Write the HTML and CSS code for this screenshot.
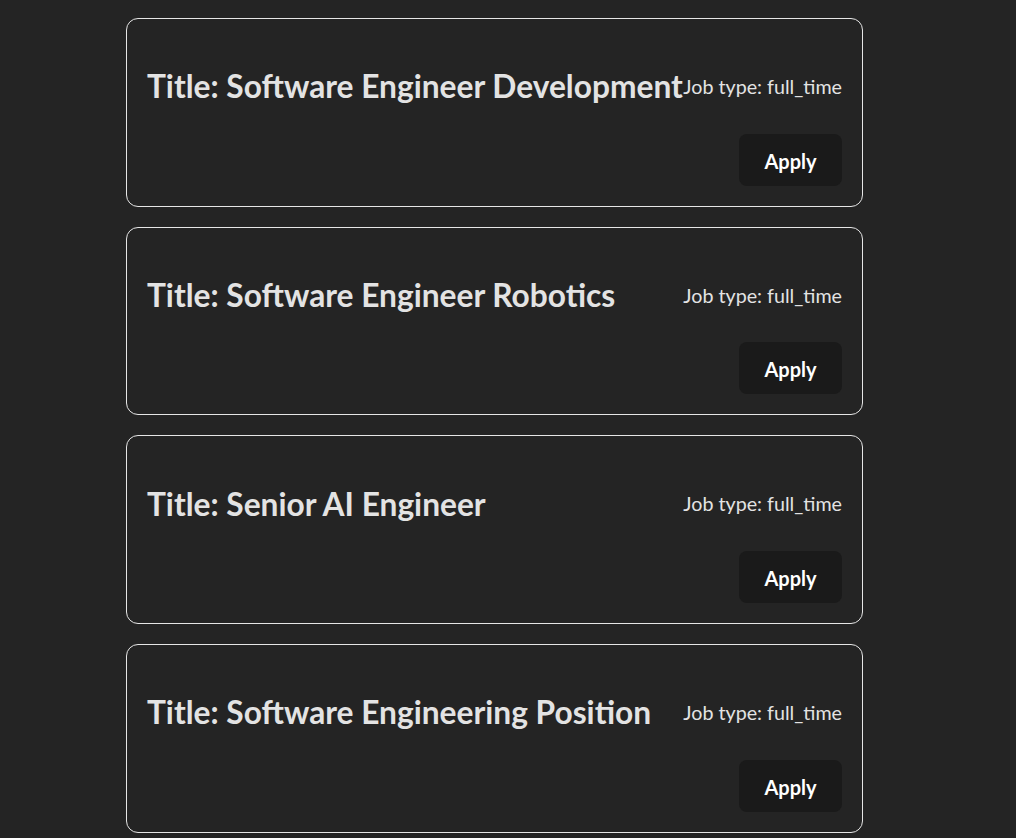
FILE: index.html
```html
<!DOCTYPE html>
<html lang="en">
<head>
<meta charset="utf-8">
<title>Jobs</title>
<link rel="stylesheet" href="styles.css">
</head>
<body>
<div class="list">
  <div class="card">
    <div class="row">
      <h1 class="title">Title: Software Engineer Development</h1>
      <p class="type">Job type: full_time</p>
    </div>
    <div class="actions"><button class="apply">Apply</button></div>
  </div>
  <div class="card">
    <div class="row">
      <h1 class="title">Title: Software Engineer Robotics</h1>
      <p class="type">Job type: full_time</p>
    </div>
    <div class="actions"><button class="apply">Apply</button></div>
  </div>
  <div class="card">
    <div class="row">
      <h1 class="title">Title: Senior AI Engineer</h1>
      <p class="type">Job type: full_time</p>
    </div>
    <div class="actions"><button class="apply">Apply</button></div>
  </div>
  <div class="card">
    <div class="row">
      <h1 class="title">Title: Software Engineering Position</h1>
      <p class="type">Job type: full_time</p>
    </div>
    <div class="actions"><button class="apply">Apply</button></div>
  </div>
</div>
</body>
</html>
```
FILE: styles.css
```css
html, body {
  margin: 0;
  padding: 0;
  background: #242424;
}
body {
  font-family: Lato, "Open Sans", sans-serif;
  color: rgba(255, 255, 255, 0.87);
}
.list {
  width: 737px;
  margin: 18px 0 0 126px;
  display: flex;
  flex-direction: column;
  gap: 20px;
}
.card {
  border: 1px solid #e6e6e6;
  border-radius: 12px;
  padding: 20px;
  display: flex;
  flex-direction: column;
}
.row {
  display: flex;
  justify-content: space-between;
  align-items: center;
  height: 94.7px;
}
.title {
  margin: 0;
  font-size: 31.7px;
  font-weight: 700;
  line-height: 1.2;
  white-space: nowrap;
  color: #e3e3e3;
}
.type {
  margin: 0;
  font-size: 19.7px;
  white-space: nowrap;
  color: #e3e3e3;
}
.actions {
  display: flex;
  justify-content: flex-end;
}
.apply {
  font-family: inherit;
  font-size: 20px;
  font-weight: 700;
  line-height: 1.5;
  padding: 11px 22px;
  width: 103px;
  height: 52px;
  border: 1px solid transparent;
  border-radius: 8px;
  background: #1a1a1a;
  color: #ffffff;
  cursor: pointer;
}
```
